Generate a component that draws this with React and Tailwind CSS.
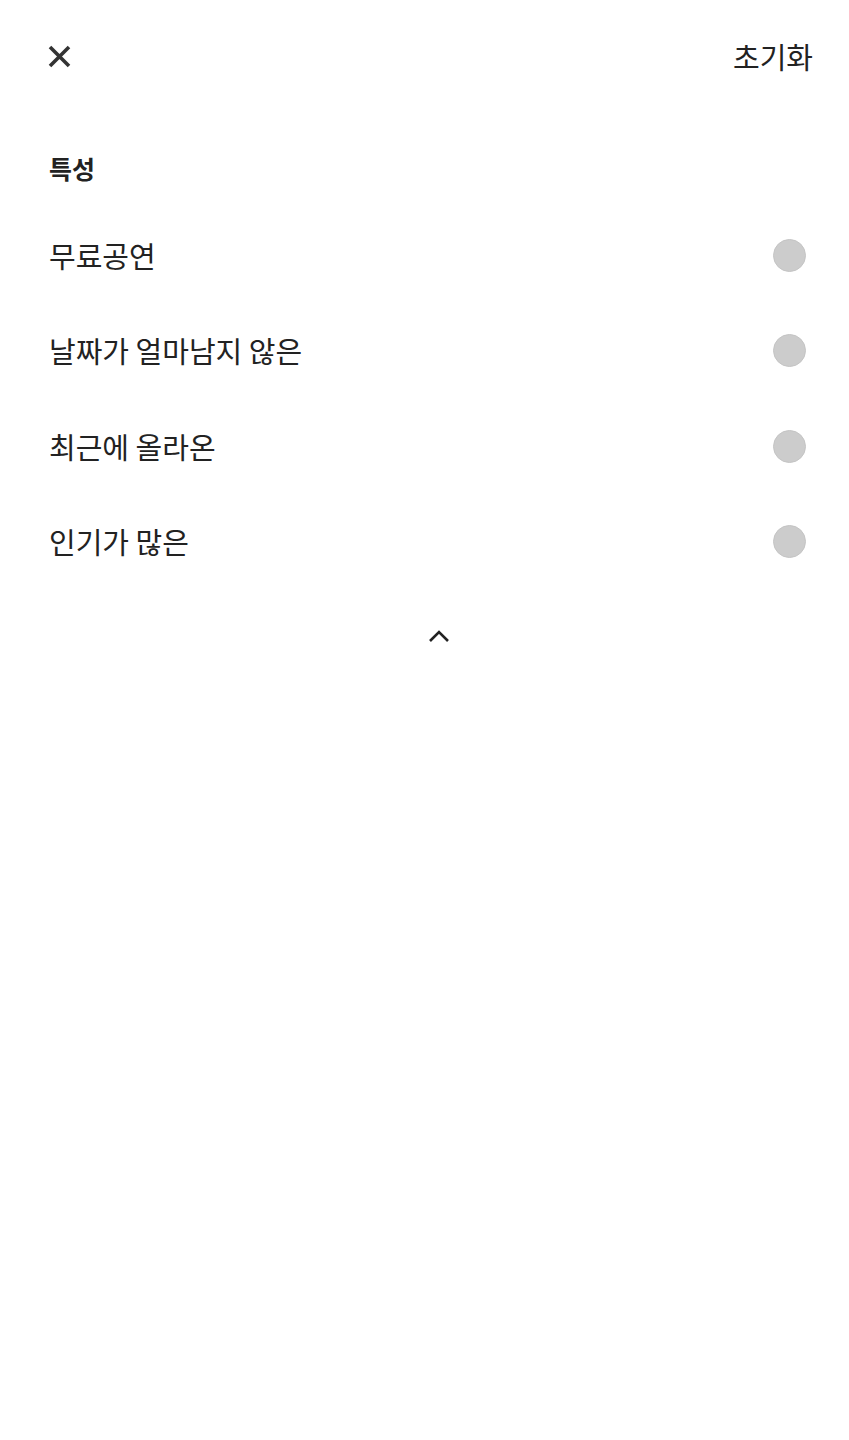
import React, { useState } from 'react';

const options = ['무료공연', '날짜가 얼마남지 않은', '최근에 올라온', '인기가 많은'];

export default function App() {
    const [selected, setSelected] = useState([]);

    const toggle = (label) => {
        setSelected((prev) => (prev.includes(label) ? prev.filter((l) => l !== label) : [...prev, label]));
    };

    return (
        <div
            className="w-[849px] h-[1440px] bg-white text-[#222222]"
            style={{ fontFamily: '"Noto Sans CJK KR", "Noto Sans", sans-serif' }}
        >
            <div className="flex items-center justify-between h-[112px] pl-[47px] pr-[36px]">
                <button className="w-[25px] h-[25px] flex items-center justify-center">
                    <svg width="25" height="25" viewBox="0 0 25 25" fill="none">
                        <path d="M3 3 L22 22 M22 3 L3 22" stroke="#333333" strokeWidth="3.6" />
                    </svg>
                </button>
                <button className="text-[29px] leading-none">초기화</button>
            </div>

            <div className="px-[49px] pt-[44px]">
                <h2 className="text-[25px] font-bold leading-none">특성</h2>
            </div>

            <ul className="mt-[27px] pl-[49px] pr-[43px]">
                {options.map((label) => (
                    <li key={label} className="flex items-center justify-between h-[95.3px]">
                        <span className="text-[29px] leading-none">{label}</span>
                        <button
                            onClick={() => toggle(label)}
                            className={`w-[33px] h-[33px] rounded-full border ${
                                selected.includes(label) ? 'bg-[#222222] border-[#222222]' : 'bg-[#cccccc] border-[#c4c4c4]'
                            }`}
                        />
                    </li>
                ))}
            </ul>

            <div className="flex justify-center pt-[39px] pl-[28px]">
                <svg width="24" height="16" viewBox="0 0 24 16" fill="none">
                    <path d="M3 13 L12 4 L21 13" stroke="#222222" strokeWidth="2.6" />
                </svg>
            </div>
        </div>
    );
}
